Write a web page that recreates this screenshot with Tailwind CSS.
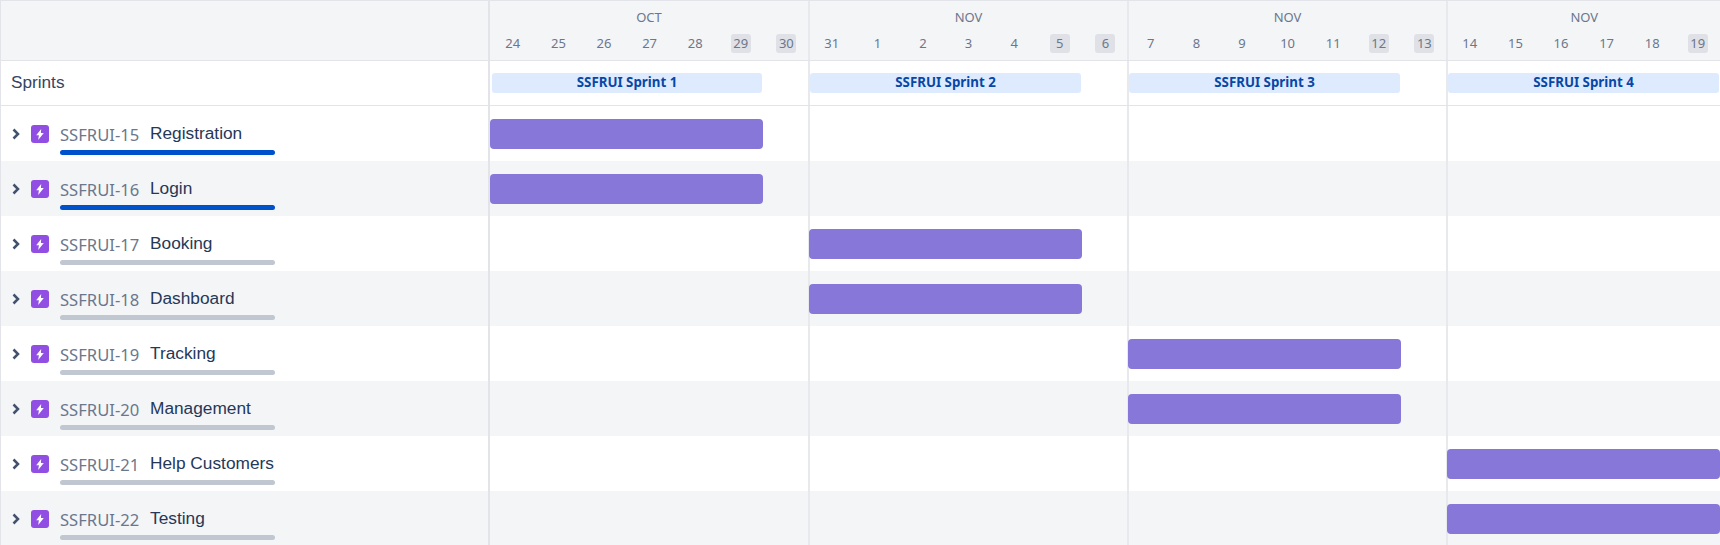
<!DOCTYPE html>
<html lang="en">
<head>
  <meta charset="UTF-8" />
  <title>Timeline</title>
  <script src="https://cdn.jsdelivr.net/npm/@tailwindcss/browser@4"></script>
</head>
<body class="h-[545px] w-[1720px] overflow-hidden bg-white font-['Liberation_Sans',sans-serif] text-[#253858]">
  <div id="timeline" class="border-l-1 border-t-1 border-[#e2e4e9]">
    <div class="flex h-[60px] border-b-1 border-[#e2e4e9] bg-[#f4f5f7]">
      <div class="w-[489px] shrink-0 border-r-2 border-[#e2e4e9]"></div>
      <div id="months" class="grid flex-1 grid-cols-[318px_319px_319px_1fr]"></div>
    </div>
    <div class="flex h-[45px] border-b-1 border-[#e2e4e9]">
      <div class="flex w-[489px] shrink-0 items-center border-r-2 border-[#e2e4e9] pl-[10px] text-[17.2px] text-[#344563]">Sprints</div>
      <div id="sprints" class="grid flex-1 grid-cols-[318px_319px_319px_1fr]"></div>
    </div>
    <div id="rows"></div>
  </div>

  <script>
    const months = [
      { name: "OCT", days: [24, 25, 26, 27, 28, 29, 30] },
      { name: "NOV", days: [31, 1, 2, 3, 4, 5, 6] },
      { name: "NOV", days: [7, 8, 9, 10, 11, 12, 13] },
      { name: "NOV", days: [14, 15, 16, 17, 18, 19] },
    ];

    const issues = [
      { key: "SSFRUI-15", title: "Registration", col: 0, done: true },
      { key: "SSFRUI-16", title: "Login", col: 0, done: true },
      { key: "SSFRUI-17", title: "Booking", col: 1 },
      { key: "SSFRUI-18", title: "Dashboard", col: 1 },
      { key: "SSFRUI-19", title: "Tracking", col: 2 },
      { key: "SSFRUI-20", title: "Management", col: 2 },
      { key: "SSFRUI-21", title: "Help Customers", col: 3 },
      { key: "SSFRUI-22", title: "Testing", col: 3 },
    ];

    const font = "font-['Noto_Sans',sans-serif]";
    const divider = "border-l-2 border-[#e8e9ed]";

    document.getElementById("months").innerHTML = months.map((m, i) => `
      <div class="${i ? divider : ""} ${font} text-[#6b778c]">
        <div class="pt-[7px] text-center text-[13px] leading-[18px]">${m.name}</div>
        <div class="mt-[8px] flex ${i ? "ml-[-1px]" : ""}">
          ${m.days.map((d, j) => `
            <div class="flex w-[45.6px] shrink-0 justify-center">
              <span class="${j > 4 ? "bg-[#dfe1e6]" : ""} flex h-[19px] w-[20px] items-center justify-center rounded-[3px] text-[13px]">${d}</span>
            </div>`).join("")}
        </div>
      </div>`).join("");

    document.getElementById("sprints").innerHTML = months.map((m, i) => `
      <div class="${i ? divider : "pl-[2px]"} flex items-center">
        <div class="${font} ${i ? "w-[271px]" : "w-[270px]"} flex h-[20px] items-center justify-center rounded-[3px] bg-[#deebff] text-[13.3px] font-bold text-[#0747a6]">SSFRUI Sprint ${i + 1}</div>
      </div>`).join("");

    document.getElementById("rows").innerHTML = issues.map((issue, n) => `
      <div class="${n % 2 ? "bg-[#f4f5f7]" : ""} flex h-[55px]">
        <div class="flex w-[489px] shrink-0 border-r-2 border-[#e2e4e9] pl-[10px]">
          <svg class="mt-[20px] h-[16px] w-[12px]" viewBox="0 0 12 16" fill="none" stroke="#42526e" stroke-width="2.5"><path d="M2.5 3.5l4.5 4.5-4.5 4.5" /></svg>
          <span class="ml-[8px] mt-[19px] flex h-[18px] w-[18px] items-center justify-center rounded-[3px] bg-[#904ee2]">
            <svg class="h-[11px] w-[8px]" viewBox="0 0 8 11" fill="#fff"><path d="M5.2 0L.2 6.3h2.7L2.2 11l5.6-7H4.9z" /></svg>
          </span>
          <div class="ml-[11px] w-[215px]">
            <div class="flex h-[44px] pt-[13px]">
              <span class="${font} mt-[2px] w-[90px] text-[16.6px] leading-[28px] text-[#6b778c]">${issue.key}</span>
              <span class="text-[17.3px] leading-[28px]">${issue.title}</span>
            </div>
            <div class="h-[5px] rounded-full ${issue.done ? "bg-[#0052cc]" : "bg-[#c1c7d0]"}"></div>
          </div>
        </div>
        <div class="grid flex-1 grid-cols-[318px_319px_319px_1fr]">
          ${months.map((m, i) => `
            <div class="${i ? divider : ""} pt-[13px]">
              ${i === issue.col ? `<div class="h-[30px] rounded-[4px] bg-[#8777d9] ${["w-[273px]", "ml-[-1px] w-[273px]", "ml-[-1px] w-[273px]", "ml-[-1px]"][i]}"></div>` : ""}
            </div>`).join("")}
        </div>
      </div>`).join("");
  </script>
</body>
</html>
